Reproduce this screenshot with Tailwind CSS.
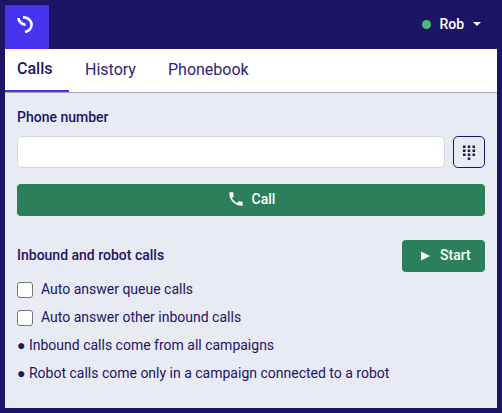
<!DOCTYPE html>
<html lang="en">
<head>
  <meta charset="UTF-8">
  <title>Softphone</title>
  <script src="https://cdn.jsdelivr.net/npm/@tailwindcss/browser@4"></script>
</head>
<body class="bg-[#1e1466] font-['Roboto',sans-serif] text-[#1e1466] w-[502px] h-[413px] overflow-hidden">
  <div class="flex flex-col h-full px-[5px] pb-[5px]">
    <!-- top bar -->
    <header class="flex justify-between items-start h-[49px] shrink-0">
      <div class="mt-[5px] w-[44px] h-[44px] bg-[#4633ee] pl-[12px] pt-[11px]">
        <svg width="16" height="17" viewBox="0 0 16 17" fill="none" stroke="#fff" stroke-width="2.700">
          <path d="M1.500 2 C1.500 5.500 3.500 7.500 8.500 9 M6 1.300 C11 1.300 14 4.500 14.500 8 C14.800 11.500 12.500 15 8 16"></path>
        </svg>
      </div>
      <div class="flex items-center h-[48px] pr-[16px] text-white text-sm font-medium">
        <span class="w-[9px] h-[9px] rounded-full bg-[#48bb78] mr-2"></span>
        <span>Rob</span>
        <span class="ml-[9px] w-0 h-0 border-x-[4px] border-x-transparent border-t-[4px] border-t-white"></span>
      </div>
    </header>
    <!-- tabs -->
    <nav class="flex bg-white h-[44px] shrink-0 border-b border-[#a3a3ab] text-base">
      <a class="px-3 pb-[1px] flex items-center font-medium border-b-2 border-[#4633ee] w-[64px]">Calls</a>
      <a class="pl-4 pb-[2px] flex items-center text-[#2c2375] w-[83px]">History</a>
      <a class="pl-4 pb-[2px] flex items-center text-[#2c2375]">Phonebook</a>
    </nav>
    <!-- content -->
    <main class="flex-1 bg-[#e8eaf4] px-3 text-sm">
      <label class="block mt-[15px] font-medium leading-[18px]">Phone number</label>
      <div class="flex gap-2 mt-[10px]">
        <input class="flex-1 h-[32px] bg-white border border-[#d4d6e2] rounded-[5px]">
        <button class="w-[32px] h-[32px] border border-[#1e1466] rounded-[5px] flex items-center justify-center">
          <svg width="12" height="15" viewBox="0 0 12 15" fill="#1e1466">
            <rect x="0" y="0.500" width="2.500" height="2.500"></rect><rect x="4.750" y="0.500" width="2.500" height="2.500"></rect><rect x="9.500" y="0.500" width="2.500" height="2.500"></rect>
            <rect x="0" y="4.500" width="2.500" height="2.500"></rect><rect x="4.750" y="4.500" width="2.500" height="2.500"></rect><rect x="9.500" y="4.500" width="2.500" height="2.500"></rect>
            <rect x="0" y="8.500" width="2.500" height="2.500"></rect><rect x="4.750" y="8.500" width="2.500" height="2.500"></rect><rect x="9.500" y="8.500" width="2.500" height="2.500"></rect>
            <rect x="4.750" y="12.500" width="2.500" height="2.500"></rect>
          </svg>
        </button>
      </div>
      <button class="mt-[16px] w-full h-[32px] pb-[2px] bg-[#2b7f5b] rounded-[4px] text-white font-medium flex items-center justify-center gap-[7px]">
        <svg width="18" height="18" viewBox="0 0 24 24" fill="#fff"><path d="M6.6 10.8c1.4 2.8 3.8 5.100 6.600 6.600l2.200-2.200c.3-.3.700-.4 1-.2 1.100.4 2.300.6 3.600.6.600 0 1 .4 1 1V20c0 .6-.4 1-1 1C10.600 21 3 13.400 3 4c0-.6.4-1 1-1h3.500c.6 0 1 .4 1 1 0 1.300.2 2.500.6 3.600.1.300 0 .7-.2 1z"></path></svg>
        Call
      </button>
      <div class="flex justify-between items-center mt-[24px]">
        <span class="font-medium pb-[2px]">Inbound and robot calls</span>
        <button class="w-[83px] h-[32px] bg-[#2b7f5b] rounded-[4px] text-white font-medium flex items-center pl-[18px] gap-[10px]">
          <svg width="10" height="10" viewBox="0 0 10 10" fill="#fff"><path d="M1 0.500 L10 5 L1 9.500 Z"></path></svg>
          <span class="pb-[2px]">Start</span>
        </button>
      </div>
      <label class="flex items-center mt-[8px] h-[20px]">
        <input type="checkbox" class="appearance-none w-4 h-4 bg-white border border-[#767676] rounded-[3px] mr-2">
        <span class="pb-[2px]">Auto answer queue calls</span>
      </label>
      <label class="flex items-center mt-[8px] h-[20px]">
        <input type="checkbox" class="appearance-none w-4 h-4 bg-white border border-[#767676] rounded-[3px] mr-2">
        <span class="pb-[2px]">Auto answer other inbound calls</span>
      </label>
      <p class="mt-[7px] leading-[20px]">● Inbound calls come from all campaigns</p>
      <p class="mt-[8px] leading-[20px]">● Robot calls come only in a campaign connected to a robot</p>
    </main>
  </div>
</body>
</html>
